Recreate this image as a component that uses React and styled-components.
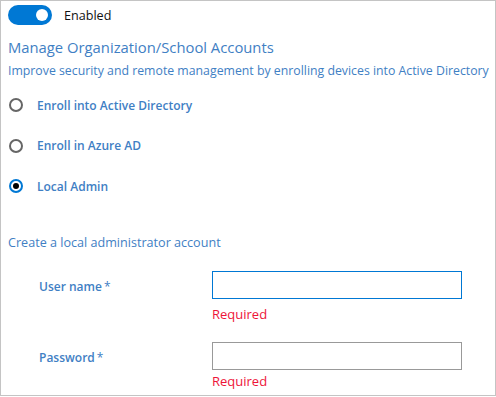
import React from "react";
import styled, { createGlobalStyle } from "styled-components";

const Global = createGlobalStyle`
  html, body { margin: 0; padding: 0; background: #fff; }
  body { font-family: "Open Sans", "Noto Sans", sans-serif; }
  * { box-sizing: border-box; }
`;

const Frame = styled.div`
  width: 496px;
  height: 396px;
  border: 1px solid #c4c4c4;
  padding: 4px 0 0 7px;
  overflow: hidden;
`;

const ToggleRow = styled.div`
  display: flex;
  align-items: center;
  gap: 12px;
  height: 20px;
`;

const Toggle = styled.div`
  width: 44px;
  height: 20px;
  border-radius: 10px;
  background: #0078d4;
  position: relative;
  &::after {
    content: "";
    position: absolute;
    right: 4px;
    top: 4px;
    width: 12px;
    height: 12px;
    border-radius: 50%;
    background: #fff;
  }
`;

const ToggleLabel = styled.span`
  font-size: 12.6px;
  color: #111;
`;

const Heading = styled.h2`
  margin: 12px 0 0;
  font-size: 14.8px;
  line-height: 20px;
  font-weight: 400;
  color: #3f80c4;
`;

const Sub = styled.p`
  margin: 6px 0 0;
  font-size: 12.3px;
  line-height: 16px;
  color: #3f80c4;
  white-space: nowrap;
`;

const RadioList = styled.div`
  display: flex;
  flex-direction: column;
  gap: 20.5px;
  margin-top: 16px;
`;

const RadioRow = styled.label`
  display: flex;
  align-items: center;
  gap: 14px;
  height: 20px;
  padding-left: 1px;
`;

const RadioCircle = styled.span`
  width: 14px;
  height: 14px;
  border-radius: 50%;
  border: 2px solid ${(p) => (p.$checked ? "#0078d4" : "#666")};
  display: flex;
  align-items: center;
  justify-content: center;
  &::after {
    content: "";
    width: 6px;
    height: 6px;
    border-radius: 50%;
    background: ${(p) => (p.$checked ? "#000" : "transparent")};
  }
`;

const RadioText = styled.span`
  font-size: 12px;
  font-weight: 600;
  color: #3f80c4;
`;

const SectionTitle = styled.div`
  margin-top: 39px;
  font-size: 12.6px;
  line-height: 16px;
  color: #3f80c4;
`;

const Field = styled.div`
  display: grid;
  grid-template-columns: 204px 250px;
  margin-top: ${(p) => p.$mt}px;
`;

const FieldLabel = styled.div`
  padding: 3px 0 0 31px;
  height: 28px;
  display: flex;
  align-items: center;
  font-size: 12px;
  font-weight: 600;
  color: #3f80c4;
  gap: 2px;
`;

const Star = styled.span`
  font-weight: 400;
`;

const InputCol = styled.div`
  display: flex;
  flex-direction: column;
`;

const Input = styled.input`
  width: 250px;
  height: 28px;
  border: 1px solid ${(p) => (p.$focused ? "#0078d4" : "#999")};
  outline: none;
  padding: 0 8px;
  font-family: inherit;
  font-size: 13px;
`;

const Error = styled.div`
  margin-top: ${(p) => p.$mt}px;
  font-size: 13px;
  line-height: 18px;
  color: #ee1438;
`;

const options = [
  { label: "Enroll into Active Directory", checked: false },
  { label: "Enroll in Azure AD", checked: false },
  { label: "Local Admin", checked: true },
];

export default function App() {
  return (
    <>
      <Global />
      <Frame>
        <ToggleRow>
          <Toggle />
          <ToggleLabel>Enabled</ToggleLabel>
        </ToggleRow>
        <Heading>Manage Organization/School Accounts</Heading>
        <Sub>Improve security and remote management by enrolling devices into Active Directory</Sub>
        <RadioList>
          {options.map((o) => (
            <RadioRow key={o.label}>
              <RadioCircle $checked={o.checked} />
              <RadioText>{o.label}</RadioText>
            </RadioRow>
          ))}
        </RadioList>
        <SectionTitle>Create a local administrator account</SectionTitle>
        <Field $mt={20}>
          <FieldLabel>
            User name<Star>*</Star>
          </FieldLabel>
          <InputCol>
            <Input $focused />
            <Error $mt={6}>Required</Error>
          </InputCol>
        </Field>
        <Field $mt={19}>
          <FieldLabel>
            Password<Star>*</Star>
          </FieldLabel>
          <InputCol>
            <Input type="password" />
            <Error $mt={2}>Required</Error>
          </InputCol>
        </Field>
      </Frame>
    </>
  );
}
